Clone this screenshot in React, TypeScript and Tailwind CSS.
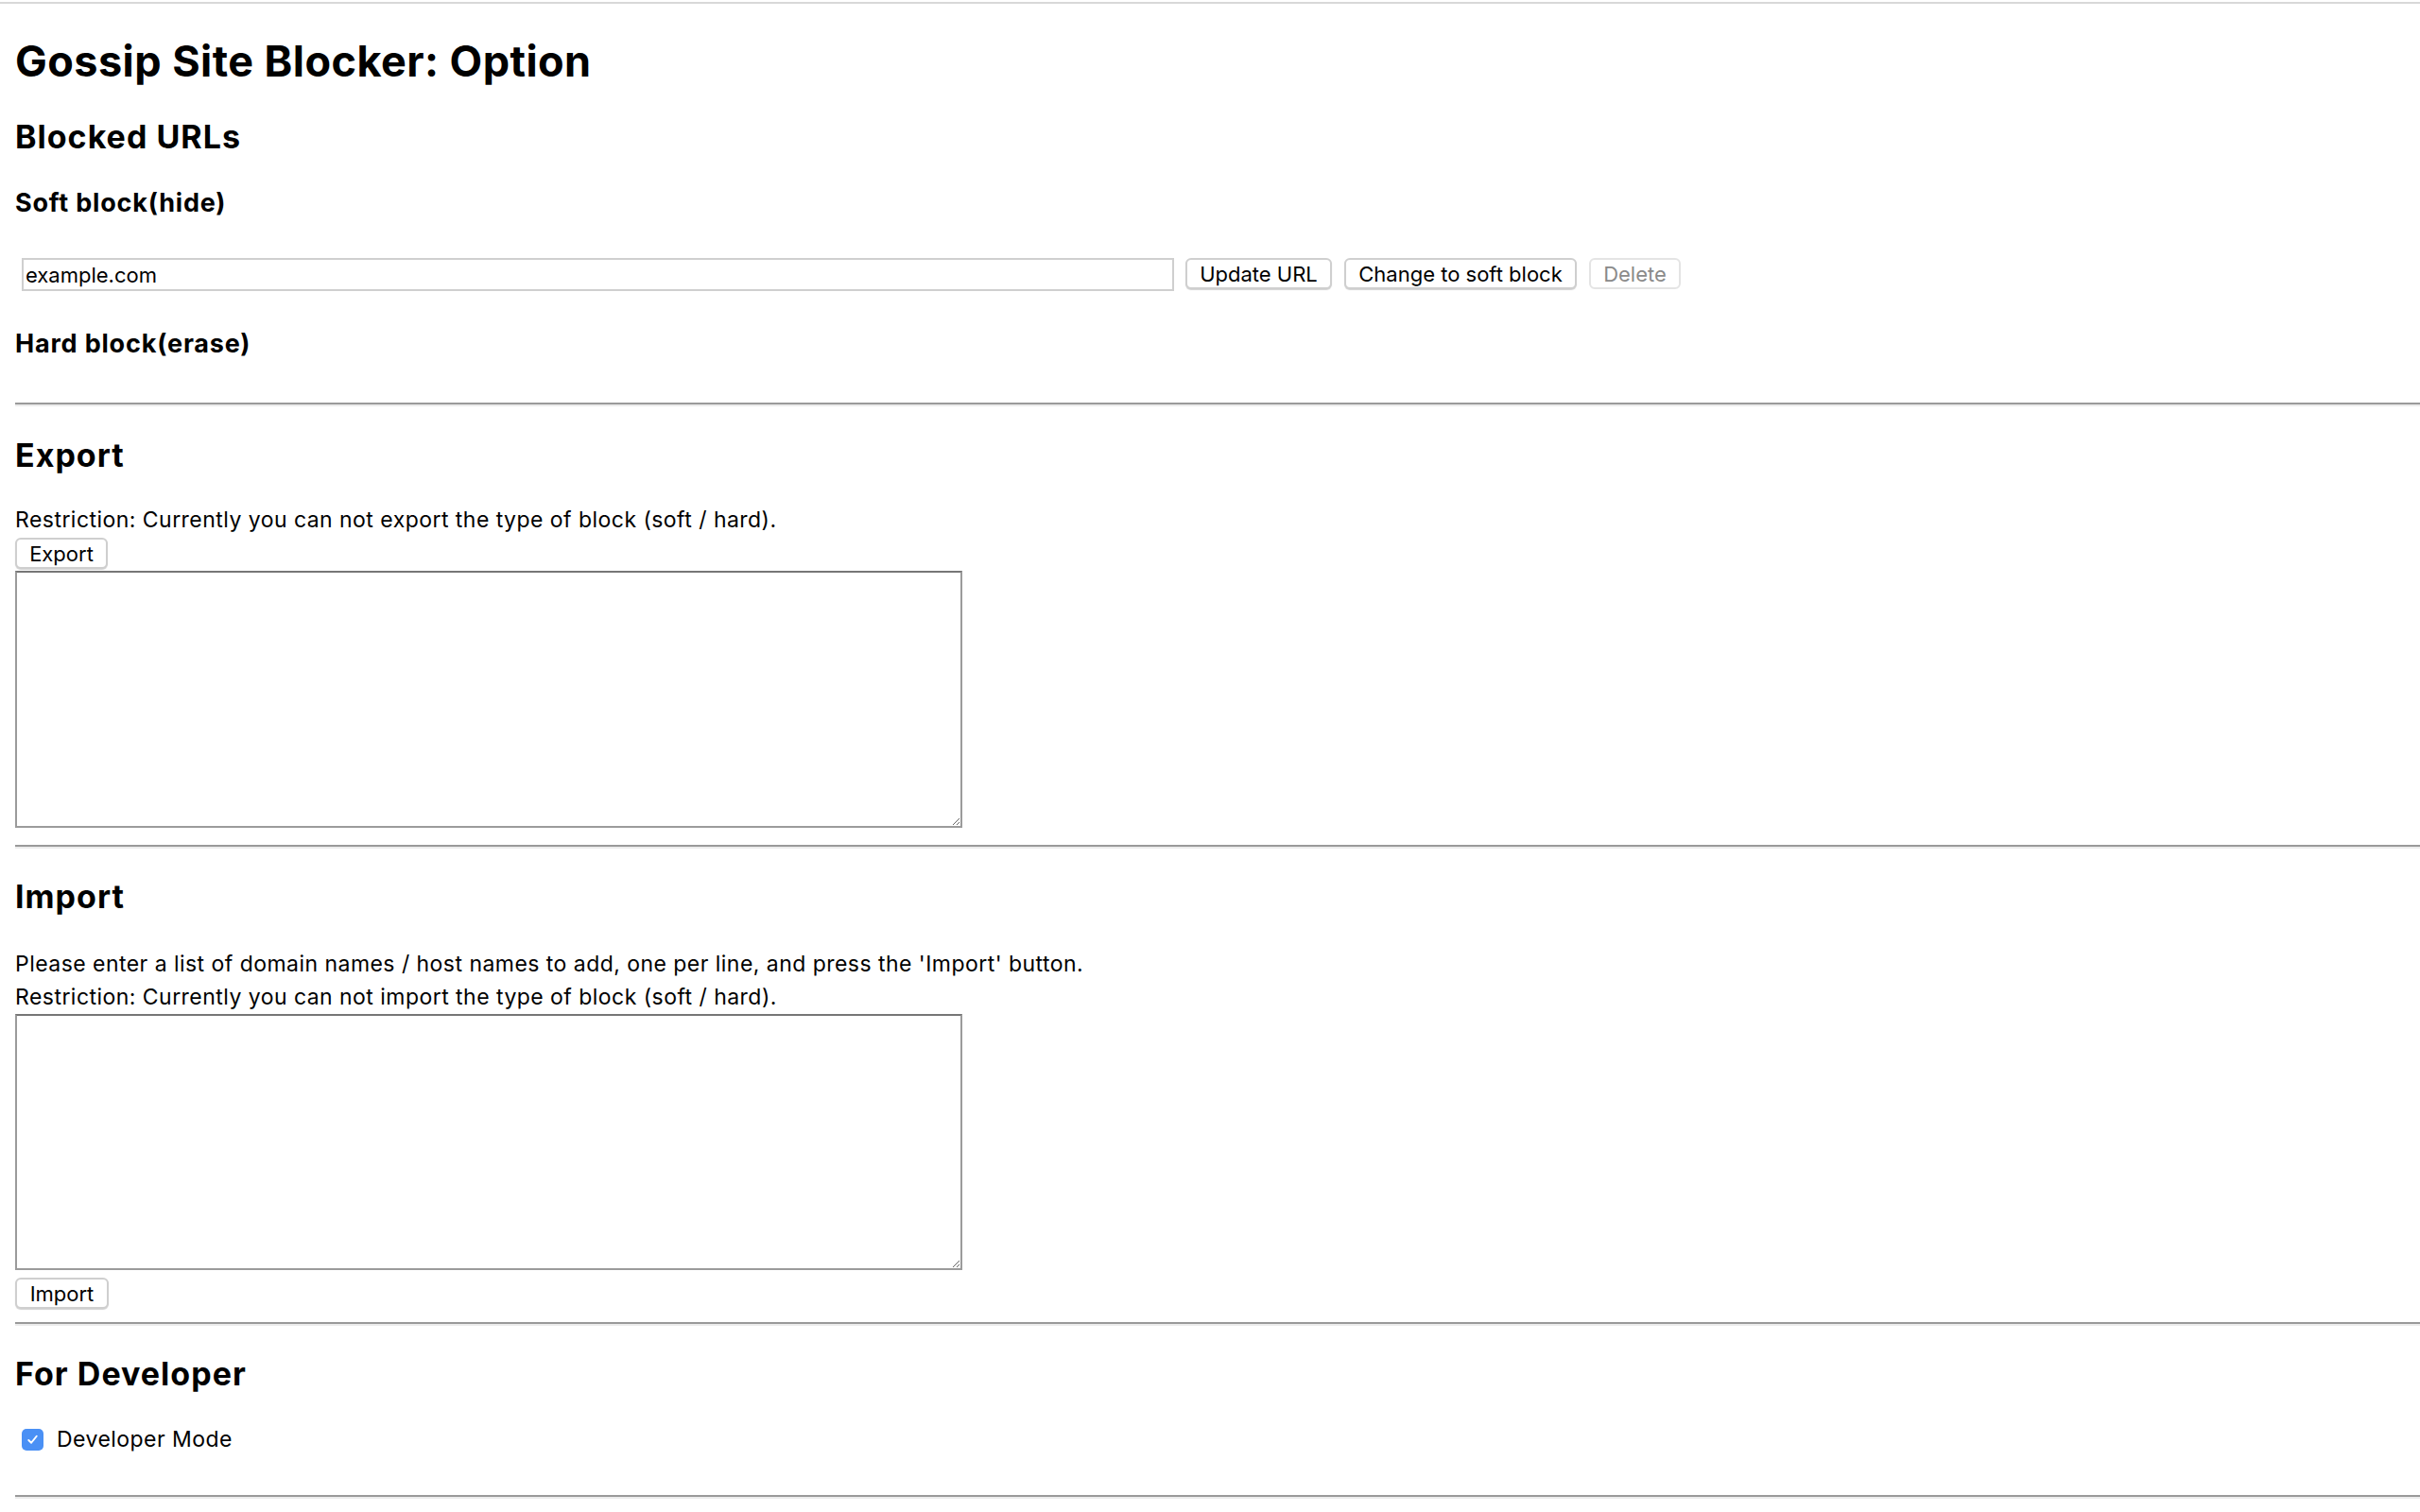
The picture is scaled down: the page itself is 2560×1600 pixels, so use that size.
import React from "react"

function Btn({ label, w, disabled }: { label: string; w: string; disabled?: boolean }) {
  return (
    <button
      className={`${w} h-[33px] shrink-0 rounded-[6px] border-2 bg-white text-[22px] leading-[28px] ${
        disabled
          ? "border-[#e4e4e4] text-[#8a8a8a]"
          : "border-[#cfcfcf] text-black shadow-[0_1px_1px_rgba(0,0,0,0.18)]"
      }`}
    >
      {label}
    </button>
  )
}

function Rule({ mt }: { mt: string }) {
  return <div className={`${mt} h-[4px] border-t-2 border-b-2 border-t-[#9a9a9a] border-b-[#ececec]`} />
}

export default function App() {
  return (
    <div className="min-h-screen bg-white pt-[2px] font-['Inter',sans-serif] text-black">
      <div className="h-[2px] bg-[#d8d8d8]" />

      <div className="pl-4">
        <h1 className="mt-[35px] text-[45px] font-bold leading-[52px] tracking-[0.01em]">Gossip Site Blocker: Option</h1>

        <h2 className="mt-[34px] text-[34px] font-bold leading-[40px] tracking-[0.03em]">Blocked URLs</h2>

        <h3 className="mt-[34px] text-[27px] font-bold leading-[32px] tracking-[0.03em]">Soft block(hide)</h3>

        <div className="mt-[42px] flex items-start">
          <input
            defaultValue="example.com"
            className="ml-[7px] h-[35px] w-[1219px] border-2 border-[#cfcfcf] px-[2px] text-[22px] outline-none"
          />
          <div className="ml-[12px] flex gap-[13px]">
            <Btn label="Update URL" w="w-[155px]" />
            <Btn label="Change to soft block" w="w-[246px]" />
            <Btn label="Delete" w="w-[97px]" disabled />
          </div>
        </div>

        <h3 className="mt-[40px] text-[27px] font-bold leading-[32px] tracking-[0.03em]">Hard block(erase)</h3>

        <Rule mt="mt-[46px]" />

        <h2 className="mt-[32px] text-[34px] font-bold leading-[40px] tracking-[0.03em]">Export</h2>

        <p className="mt-[34px] text-[23px] leading-[28px] tracking-[0.02em]">
          Restriction: Currently you can not export the type of block (soft / hard).
        </p>
        <div className="mt-[5px]">
          <Btn label="Export" w="w-[98px]" />
        </div>
        <textarea className="mt-[2px] block h-[272px] w-[1002px] border-2 border-[#9b9b9b] border-t-[#767676] outline-none" />

        <Rule mt="mt-[18px]" />

        <h2 className="mt-[31px] text-[34px] font-bold leading-[40px] tracking-[0.03em]">Import</h2>

        <p className="mt-[37px] text-[23px] leading-[28px] tracking-[0.02em]">
          Please enter a list of domain names / host names to add, one per line, and press the 'Import' button.
        </p>
        <p className="mt-[7px] text-[23px] leading-[28px] tracking-[0.02em]">
          Restriction: Currently you can not import the type of block (soft / hard).
        </p>
        <textarea className="mt-[4px] block h-[271px] w-[1002px] border-2 border-[#9b9b9b] border-t-[#767676] outline-none" />
        <div className="mt-[8px]">
          <Btn label="Import" w="w-[99px]" />
        </div>

        <Rule mt="mt-[14px]" />

        <h2 className="mt-[31px] text-[34px] font-bold leading-[40px] tracking-[0.03em]">For Developer</h2>

        <div className="mt-[35px] flex h-[28px] items-center">
          <div className="ml-[7px] flex h-[23px] w-[23px] items-center justify-center rounded-[5px] bg-[#4a90f5]">
            <svg viewBox="0 0 16 16" className="h-[15px] w-[15px]" fill="none">
              <path d="M3.5 8.5 L6.5 11.5 L12.5 4" stroke="white" strokeWidth="2" strokeLinecap="round" strokeLinejoin="round" />
            </svg>
          </div>
          <span className="ml-[14px] text-[23px] leading-[28px] tracking-[0.02em]">Developer Mode</span>
        </div>

        <Rule mt="mt-[45px]" />
      </div>
    </div>
  )
}
